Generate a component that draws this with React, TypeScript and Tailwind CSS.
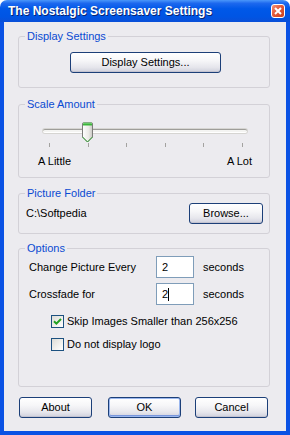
import React from 'react';

const XpButton: React.FC<{ label: string; isDefault?: boolean; className?: string }> = ({ label, isDefault, className = '' }) => (
  <div
    className={`h-[21px] flex items-center justify-center rounded-[3px] border border-[#1c3f78] bg-[linear-gradient(#ffffff_0%,#f6f6f8_40%,#e6e6ec_75%,#cfd0dc_100%)] ${
      isDefault ? 'shadow-[inset_0_0_0_1px_#9bb7ee,inset_0_-1px_0_1px_#7896dc]' : 'shadow-[inset_0_-1px_0_#c3c3d0]'
    } ${className}`}
  >
    {label}
  </div>
);

const GroupBox: React.FC<{ title: string; children: React.ReactNode }> = ({ title, children }) => (
  <fieldset className="w-[252px] rounded-[3px] border border-[#d3d1d7]">
    <legend className="ml-[6px] px-[2px] leading-[13px] text-[#0a4ad2]">{title}</legend>
    {children}
  </fieldset>
);

const Checkbox: React.FC<{ checked?: boolean }> = ({ checked }) => (
  <div className="w-[13px] h-[13px] border border-[#1c5180] bg-[linear-gradient(135deg,#dcdcd6_0%,#f2f2ef_60%,#ffffff_100%)] flex items-center justify-center">
    {checked && (
      <svg width="9" height="9" viewBox="0 0 9 9">
        <path d="M1 4.2 L3.4 6.6 L8 2" fill="none" stroke="#21a121" strokeWidth="2" />
      </svg>
    )}
  </div>
);

const SliderThumb = () => (
  <svg width="11" height="21" viewBox="0 0 11 21">
    <defs>
      <linearGradient id="thumbFill" x1="0" x2="1" y1="0" y2="0">
        <stop offset="0" stopColor="#ffffff" />
        <stop offset="0.6" stopColor="#ecebe8" />
        <stop offset="1" stopColor="#c9c8c3" />
      </linearGradient>
    </defs>
    <path d="M0.5 2 Q0.5 0.5 2 0.5 H9 Q10.5 0.5 10.5 2 V15 L5.5 20 L0.5 15 Z" fill="url(#thumbFill)" stroke="#7c7c7a" />
    <path d="M1 1.5 Q1 1 2 1 H9 Q10 1 10 1.5 V3.5 H1 Z" fill="#3cb43c" />
    <path d="M1 1 H10" stroke="#8fe08f" />
    <path d="M0.5 15 L5.5 20 L10.5 15" fill="none" stroke="#3aa83a" />
  </svg>
);

const InputBox: React.FC<{ value: string; caret?: boolean }> = ({ value, caret }) => (
  <div className="w-[38px] h-[22px] border border-[#7f9db9] bg-white flex items-center pl-[5px]">
    <span>{value}</span>
    {caret && <span className="w-px h-[13px] bg-black" />}
  </div>
);

export default function App() {
  const ticks = [0, 1, 2, 3, 4, 5];

  return (
    <div className="w-[290px] h-[435px] flex flex-col bg-white font-['Liberation_Sans',Arial,sans-serif] text-[11px] text-black">
      {/* title bar */}
      <div className="h-[22px] shrink-0 rounded-t-[7px] bg-[linear-gradient(#4a97fa_0%,#1d68ee_15%,#0058e8_40%,#0055e4_75%,#0a4fd8_100%)] flex items-center justify-between pl-[8px] pr-[5px]">
        <span className="text-white font-bold text-[12px] leading-none [text-shadow:1px_1px_#0a2470]">
          The Nostalgic Screensaver Settings
        </span>
        <div className="w-[14px] h-[14px] rounded-[3px] border border-white bg-[linear-gradient(135deg,#f39378_0%,#e2593a_45%,#c8411f_100%)] flex items-center justify-center">
          <svg width="8" height="8" viewBox="0 0 8 8">
            <path d="M1 1 L7 7 M7 1 L1 7" stroke="white" strokeWidth="2" />
          </svg>
        </div>
      </div>

      {/* body */}
      <div className="flex-1 flex flex-col bg-[#ecebef] border-x-4 border-b-4 border-[#0a52e4] pl-[14px] pt-[8px]">
        <GroupBox title="Display Settings">
          <div className="h-[44px] flex items-start pl-[51px] pt-[9px]">
            <XpButton label="Display Settings..." className="w-[151px]" />
          </div>
        </GroupBox>

        <div className="mt-[10px]">
          <GroupBox title="Scale Amount">
            <div className="h-[66px] pt-[11px]">
              <div className="relative h-[20px]">
                <div className="absolute left-[24px] top-[7px] w-[204px] h-[4px] rounded-[2px] bg-[#f4f4f2] border-t border-[#9e9d99] border-b border-b-white shadow-[0_0_0_1px_#d6d5d2]" />
                <div className="absolute left-[63px] top-0">
                  <SliderThumb />
                </div>
              </div>
              <div className="mt-px ml-[30px] w-[194px] h-[4px] flex justify-between">
                {ticks.map(t => (
                  <div key={t} className="w-px h-[4px] bg-[#a3a2a0]" />
                ))}
              </div>
              <div className="mt-[8px] flex justify-between pl-[19px] pr-[17px] leading-[13px]">
                <span>A Little</span>
                <span>A Lot</span>
              </div>
            </div>
          </GroupBox>
        </div>

        <div className="mt-[9px]">
          <GroupBox title="Picture Folder">
            <div className="h-[33px] pt-[3px] flex items-start justify-between pl-[7px] pr-[6px]">
              <span className="h-[21px] flex items-center">C:\Softpedia</span>
              <XpButton label="Browse..." className="w-[74px]" />
            </div>
          </GroupBox>
        </div>

        <div className="mt-[8px]">
          <GroupBox title="Options">
            <div className="h-[131px] pt-px pl-[10px] flex flex-col">
              <div className="flex items-center h-[22px]">
                <span className="w-[127px]">Change Picture Every</span>
                <InputBox value="2" />
                <span className="ml-[9px]">seconds</span>
              </div>
              <div className="flex items-center h-[22px] mt-[5px]">
                <span className="w-[127px]">Crossfade for</span>
                <InputBox value="2" caret />
                <span className="ml-[9px]">seconds</span>
              </div>
              <div className="flex items-center h-[13px] mt-[10px] pl-[22px] gap-[3px]">
                <Checkbox checked />
                <span>Skip Images Smaller than 256x256</span>
              </div>
              <div className="flex items-center h-[13px] mt-[10px] pl-[22px] gap-[3px]">
                <Checkbox />
                <span>Do not display logo</span>
              </div>
            </div>
          </GroupBox>
        </div>

        <div className="mt-[10px] flex pl-px">
          <XpButton label="About" className="w-[73px]" />
          <XpButton label="OK" isDefault className="w-[73px] ml-[16px]" />
          <XpButton label="Cancel" className="w-[73px] ml-[14px]" />
        </div>
      </div>
    </div>
  );
}
